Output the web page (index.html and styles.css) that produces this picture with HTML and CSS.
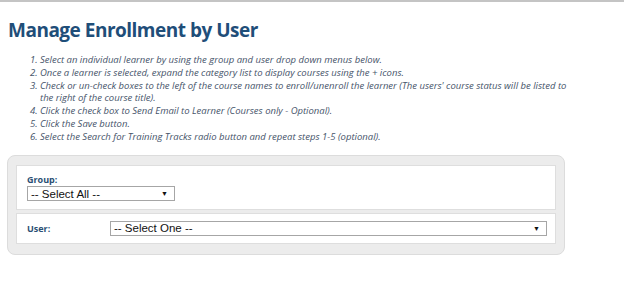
FILE: index.html
```html
<!DOCTYPE html>
<html>
<head>
<meta charset="utf-8">
<link rel="stylesheet" href="styles.css">
</head>
<body>
<div class="topline"></div>
<h1 class="title">Manage Enrollment by User</h1>
<ol class="steps">
  <li>Select an individual learner by using the group and user drop down menus below.</li>
  <li>Once a learner is selected, expand the category list to display courses using the + icons.</li>
  <li>Check or un-check boxes to the left of the course names to enroll/unenroll the learner (The users' course status will be listed to the right of the course title).</li>
  <li>Click the check box to Send Email to Learner (Courses only - Optional).</li>
  <li>Click the Save button.</li>
  <li>Select the Search for Training Tracks radio button and repeat steps 1-5 (optional).</li>
</ol>
<div class="panel">
  <div class="box box-group">
    <div class="label">Group:</div>
    <div class="select select-group"><span>-- Select All --</span><span class="arrow">&#9660;</span></div>
  </div>
  <div class="box box-user">
    <div class="label label-user">User:</div>
    <div class="select select-user"><span>-- Select One --</span><span class="arrow">&#9660;</span></div>
  </div>
</div>
</body>
</html>
```
FILE: styles.css
```css
html, body {
  margin: 0;
  padding: 0;
  background: #ffffff;
}
body {
  width: 624px;
  height: 297px;
  overflow: hidden;
}
.topline {
  height: 2px;
  background: #c4c4c4;
}
.title {
  margin: 14px 0 0 8px;
  font-family: "Open Sans", sans-serif;
  font-weight: 700;
  font-size: 19px;
  line-height: 28px;
  color: #1f4e79;
  letter-spacing: -0.5px;
}
.steps {
  margin: 10px 0 0 0;
  padding-left: 40px;
  font-family: "Open Sans", sans-serif;
  font-style: italic;
  font-size: 9.5px;
  line-height: 12.8px;
  color: #46546a;
  width: 530px;
}
.panel {
  margin: 11px 0 0 7px;
  width: 540px;
  padding: 9px 8px 10px 8px;
  background: #ececec;
  border: 1px solid #dcdcdc;
  border-radius: 8px;
  display: flex;
  flex-direction: column;
  gap: 3px;
}
.box {
  background: #ffffff;
  border: 1px solid #dedede;
}
.box-group {
  box-sizing: border-box;
  height: 45px;
  padding: 1px 10px 0 10px;
  display: flex;
  flex-direction: column;
  justify-content: center;
  gap: 1px;
}
.box-user {
  height: 29px;
  padding: 0 8px 0 10px;
  display: flex;
  align-items: center;
}
.label {
  font-family: "Open Sans", sans-serif;
  font-weight: 700;
  font-size: 9px;
  line-height: 11px;
  color: #2b4f74;
}
.label-user {
  width: 83px;
}
.select {
  box-sizing: border-box;
  height: 15px;
  border: 1px solid #a6a6a6;
  background: #ffffff;
  display: flex;
  align-items: center;
  justify-content: space-between;
  padding: 0 6px 0 3px;
  font-family: "Liberation Sans", Arial, sans-serif;
  font-size: 11.5px;
  color: #111;
}
.select-group {
  width: 148px;
}
.select-user {
  flex: 1;
}
.arrow {
  font-size: 7px;
  color: #111;
}
```
